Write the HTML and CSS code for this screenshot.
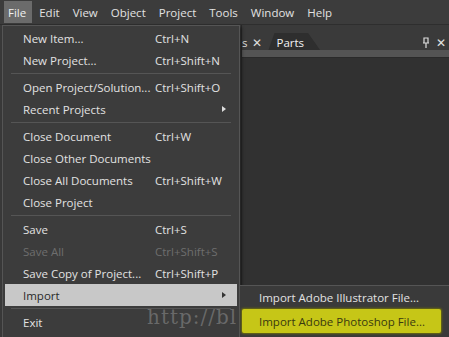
FILE: index.html
```html
<!DOCTYPE html>
<html>
<head>
<meta charset="utf-8">
<title>File menu</title>
<link rel="stylesheet" href="styles.css">
</head>
<body>
<div class="menubar">
	<span class="top on">File</span>
	<span class="top">Edit</span>
	<span class="top">View</span>
	<span class="top">Object</span>
	<span class="top">Project</span>
	<span class="top">Tools</span>
	<span class="top">Window</span>
	<span class="top">Help</span>
</div>
<div class="main">
	<div class="leftpane"></div>
	<div class="panel">
		<div class="tabbar">
			<span class="tab">s <i class="x">&#x2715;</i></span>
			<span class="tab cur">Parts</span>
			<span class="tools"><svg width="8" height="11" viewBox="0 0 8 11"><path d="M2 1h4v5H2z M1 6h6 M4 6v5" fill="none" stroke="#ddd" stroke-width="1.2"/></svg><i class="x">&#x2715;</i></span>
		</div>
		<div class="strip"></div>
		<div class="body"></div>
	</div>
</div>

<ul class="menu">
	<li><span>New Item...</span><em>Ctrl+N</em></li>
	<li><span>New Project...</span><em>Ctrl+Shift+N</em></li>
	<li class="sep"></li>
	<li><span>Open Project/Solution...</span><em>Ctrl+Shift+O</em></li>
	<li class="sub"><span>Recent Projects</span><em></em></li>
	<li class="sep"></li>
	<li><span>Close Document</span><em>Ctrl+W</em></li>
	<li><span>Close Other Documents</span><em></em></li>
	<li><span>Close All Documents</span><em>Ctrl+Shift+W</em></li>
	<li><span>Close Project</span><em></em></li>
	<li class="sep"></li>
	<li><span>Save</span><em>Ctrl+S</em></li>
	<li class="off"><span>Save All</span><em>Ctrl+Shift+S</em></li>
	<li><span>Save Copy of Project...</span><em>Ctrl+Shift+P</em></li>
	<li class="sub hot"><span>Import</span><em></em></li>
	<li class="sep"></li>
	<li><span>Exit</span><em></em></li>
</ul>

<ul class="submenu">
	<li>Import Adobe Illustrator File...</li>
	<li class="pick">Import Adobe Photoshop File...</li>
</ul>

<div class="mark">http://bl</div>
</body>
</html>
```

FILE: styles.css
```css
*{ margin:0; padding:0; list-style:none; box-sizing:border-box;}
body{ width:449px; height:337px; overflow:hidden; background:#323232; color:#e2e2e2; font-family:"Open Sans","Noto Sans",sans-serif; font-size:11.5px; position:relative;}

.menubar{ height:25px; display:flex; align-items:center; padding-left:4px; background:#3c3c3c; border-bottom:1px solid #2e2e2e;}
.top{ height:22px; line-height:23px; padding:0 5px; margin-right:3px; font-size:11.5px;}
.top.on{ background:#6b6b6b; color:#f0f0f0; padding:0 6px 0 4px; margin-right:2px;}

.main{ display:flex; height:312px;}
.leftpane{ width:241px; background:#3a3a3a;}
.panel{ flex:1; display:flex; flex-direction:column; border-left:1px solid #2a2a2a; background:#3a3a3a;}
.tabbar{ height:25px; display:flex; align-items:flex-end; padding-top:8px; background:#3a3a3a;}
.tab{ height:17px; line-height:19px; padding:0 4px 0 0; color:#ddd;}
.tab.cur{ background:#2e2e2e; padding:0 16px 0 8px; margin-left:2px; clip-path:polygon(6px 0,calc(100% - 12px) 0,100% 100%,0 100%); color:#f2f2f2;}
.x{ font-style:normal; font-size:12px; margin-left:2px;}
.tools{ margin-left:auto; height:17px; display:flex; align-items:center; gap:4px; padding-right:3px; padding-top:2px;}
.strip{ height:7px; background:#545454;}
.body{ flex:1; background:#313131; border-top:1px solid #2a2a2a;}

.menu{ position:absolute; left:2px; top:25px; width:238px; height:320px; background:#3c3c3c; border:1px solid #555; padding:1px 2px 0 2px; box-shadow:2px 2px 3px rgba(0,0,0,.4);}
.menu li{ height:22px; display:flex; align-items:center; padding-left:18px;}
.menu li span{ width:132px; white-space:nowrap;}
.menu li em{ font-style:normal; flex:1;}
.menu li.sep{ height:5px; padding:0 6px;}
.menu li.sep::before{ content:""; display:block; width:100%; height:1px; background:#555;}
.menu li.off{ color:#6e6e6e;}
.menu li.sub{ position:relative;}
.menu li.sub::after{ content:""; position:absolute; right:8px; top:8px; border:3px solid transparent; border-left:4px solid #ddd;}
.menu li.hot{ background:#c8c8c8; color:#2a2a2a;}
.menu li.hot::after{ border-left-color:#333;}

.submenu{ position:absolute; left:239px; top:285px; width:216px; height:60px; background:#3a3a3a; border:1px solid #555; padding:1px 2px;}
.submenu li{ height:22px; line-height:22px; padding-left:17px; white-space:nowrap;}
.submenu li.pick{ background:#c6c617; color:#3a3a10; border-radius:2px; box-shadow:0 0 2px 1px #6a6a10; margin-right:11px; height:24px; line-height:25px;}

.mark{ position:absolute; left:147px; top:305px; font-family:"DejaVu Serif",serif; font-size:20px; color:rgba(150,150,150,.5); letter-spacing:1px;}
```
